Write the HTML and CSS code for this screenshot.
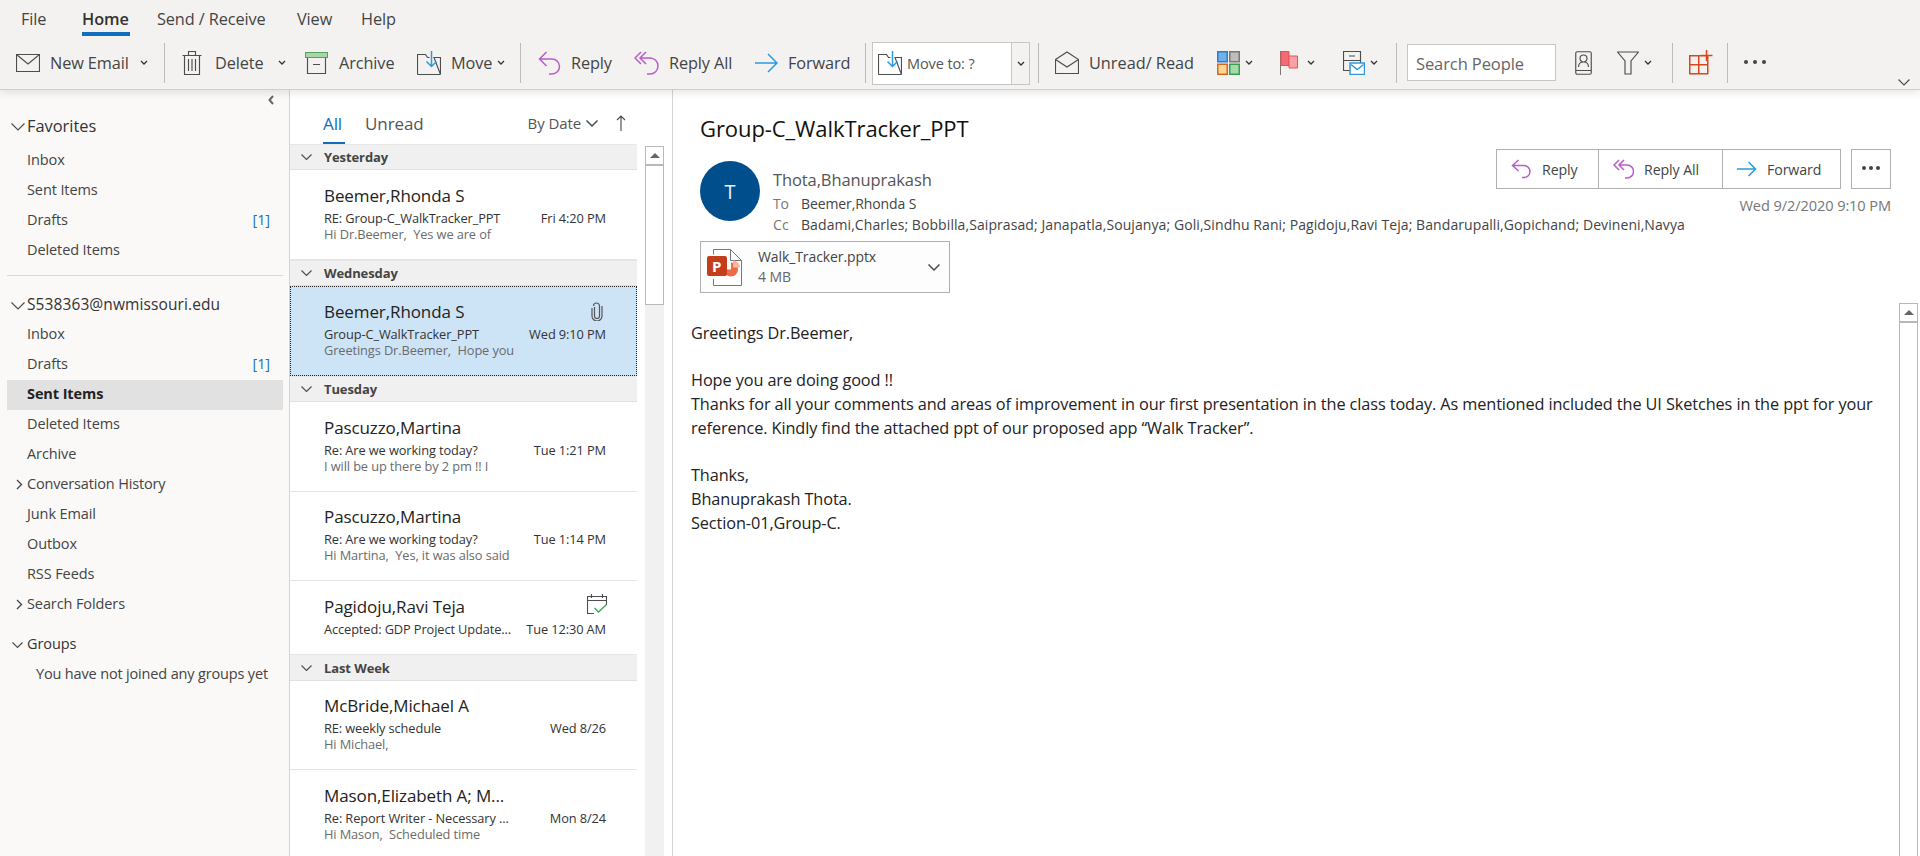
FILE: index.html
```html
<!DOCTYPE html>
<html lang="en">
<head>
<meta charset="utf-8">
<title>Group-C_WalkTracker_PPT - Outlook</title>
<link rel="stylesheet" href="styles.css">
</head>
<body>
<div class="app">
<header class="ribbon">
  <nav class="tabs">
    <span class="tab t-file">File</span>
    <span class="tab t-home active">Home</span>
    <span class="tab t-send">Send / Receive</span>
    <span class="tab t-view">View</span>
    <span class="tab t-help">Help</span>
  </nav>
  <div class="tools">
    <div class="tool w-new"><svg class="ic" width="24" height="18" viewBox="0 0 24 18"><path class="ln" d="M.5.5h23v17H.5zM.5.5 12 10 23.5.5"/></svg><span>New Email</span><svg class="cv cv-new" width="8" height="5" viewBox="0 0 8 5"><path class="cvp" d="M1 1l3 3 3-3"/></svg></div>
    <i class="sep sep-a"></i>
    <div class="tool w-del"><svg class="ic" width="20" height="24" viewBox="0 0 20 24"><path class="ln" d="M.5 4.500h19M6.500 4V.5h7V4M2.500 4.500v19h15v-19M6.500 8v12M10 8v12M13.500 8v12"/></svg><span>Delete</span><svg class="cv cv-del" width="8" height="5" viewBox="0 0 8 5"><path class="cvp" d="M1 1l3 3 3-3"/></svg></div>
    <div class="tool w-arc"><svg class="ic" width="23" height="22" viewBox="0 0 23 22"><path class="ln" d="M2.500 6v15.500h18V6M8 12.500h7"/><rect x=".5" y=".5" width="22" height="5" fill="#a9d5a9" stroke="#4fa35b"/></svg><span>Archive</span></div>
    <div class="tool w-mov"><svg class="ic" width="24" height="24" viewBox="0 0 24 24"><path class="ln" d="M.5 23.500V3.500h8l2 3h2M17 6.500h6.500v17zM.5 23.500h23"/><path class="bl" d="M14.500 0v15M9.500 10.500l5 5 5-5"/></svg><span>Move</span><svg class="cv cv-mov" width="8" height="5" viewBox="0 0 8 5"><path class="cvp" d="M1 1l3 3 3-3"/></svg></div>
    <i class="sep sep-b"></i>
    <div class="tool w-rep"><svg class="ic" width="23" height="24" viewBox="0 0 23 24"><path class="pu" d="M8.500 1 1.500 8l7 7M1.500 8H14a7 7 0 0 1 0 15h-3"/></svg><span>Reply</span></div>
    <div class="tool w-all"><svg class="ic" width="25" height="24" viewBox="0 0 25 24"><path class="pu" d="M7 1 1 7l6 6M12 1 6 7l6 6M6 7h10a7 7 0 0 1 0 16h-3"/></svg><span>Reply All</span></div>
    <div class="tool w-fwd"><svg class="ic" width="23" height="20" viewBox="0 0 23 20"><path class="bl" d="M0 10h21.500M13 1l9 9-9 9"/></svg><span>Forward</span></div>
    <i class="sep sep-c"></i>
    <div class="moveto"><svg class="ic" width="24" height="24" viewBox="0 0 24 24"><path class="ln" d="M.5 23.500V3.500h8l2 3h2M17 6.500h6.500v17zM.5 23.500h23"/><path class="bl" d="M14.500 0v15M9.500 10.500l5 5 5-5"/></svg><span class="moveto-label">Move to: ?</span><span class="moveto-drop"><svg width="8" height="5" viewBox="0 0 8 5"><path class="cvp" d="M1 1l3 3 3-3"/></svg></span></div>
    <i class="sep sep-d"></i>
    <div class="tool w-unr"><svg class="ic" width="24" height="23" viewBox="0 0 24 23"><path class="ln" d="M.5 8.500 12 1l11.500 7.500v14H.5zM.5 8.500 12 16l11.500-7.500"/></svg><span>Unread/ Read</span></div>
    <div class="tool w-cat"><svg class="ic" width="23" height="24" viewBox="0 0 23 24"><rect x=".75" y=".75" width="9.500" height="10" fill="#6fb0e6" stroke="#2b7cd3" stroke-width="1.500"/><rect x="12.750" y=".75" width="9.500" height="10" fill="#bdbdbd" stroke="#777" stroke-width="1.500"/><rect x=".75" y="13.250" width="9.500" height="10" fill="#fdd693" stroke="#d8661a" stroke-width="1.500"/><rect x="12.750" y="13.250" width="9.500" height="10" fill="#a5dba8" stroke="#3b9d4f" stroke-width="1.500"/></svg><svg class="cv cv-cat" width="8" height="5" viewBox="0 0 8 5"><path class="cvp" d="M1 1l3 3 3-3"/></svg></div>
    <div class="tool w-flg"><svg class="ic" width="18" height="24" viewBox="0 0 18 24"><path d="M.5 0v24" stroke="#777" fill="none"/><path d="M1 .5h8v14H1z" fill="#f46a72" stroke="#e8505a"/><path d="M9 5h8.500v12H9z" fill="#f9a1a5" stroke="#e8505a"/></svg><svg class="cv cv-flg" width="8" height="5" viewBox="0 0 8 5"><path class="cvp" d="M1 1l3 3 3-3"/></svg></div>
    <div class="tool w-rul"><svg class="ic" width="22" height="24" viewBox="0 0 22 24"><path class="ln" d="M7 19.500H.5V.5h17v12M6 5h6M.5 9.500h17"/><rect x="7" y="12" width="14.500" height="11.500" fill="#fff" stroke="#2b9ae0" stroke-width="1.500"/><path class="bl" d="m8 13.500 6.200 5 6.300-5"/></svg><svg class="cv cv-rul" width="8" height="5" viewBox="0 0 8 5"><path class="cvp" d="M1 1l3 3 3-3"/></svg></div>
    <i class="sep sep-e"></i>
    <div class="search">Search People</div>
    <div class="tool w-adr"><svg class="ic" width="17" height="24" viewBox="0 0 17 24"><rect class="ln" x=".75" y=".75" width="15.500" height="22.500" rx="1.500"/><path class="ln" d="M1 19.500h15M3.500 16c0-3.500 2-5 5-5s5 1.500 5 5M8.500 11a3.500 3.500 0 1 0 0-7 3.500 3.500 0 0 0 0 7z"/></svg></div>
    <div class="tool w-fil"><svg class="ic" width="22" height="24" viewBox="0 0 22 24"><path class="ln" d="M.5 1h21l-7.500 9v13H8V10z"/></svg><svg class="cv cv-fil" width="8" height="5" viewBox="0 0 8 5"><path class="cvp" d="M1 1l3 3 3-3"/></svg></div>
    <i class="sep sep-f"></i>
    <div class="tool w-add"><svg class="ic" width="24" height="25" viewBox="0 0 24 25"><path class="or" d="M.75 5.750h18v18H.75zM.75 14.750h18M9.750 5.750v18M17.500 0v11M12 5.500h11.500"/></svg></div>
    <i class="sep sep-g"></i>
    <div class="dots"><i></i><i></i><i></i></div>
    <svg class="collapse" width="12" height="7" viewBox="0 0 12 7"><path class="ln" d="M.5.500l5.500 5.500L11.500.5"/></svg>
  </div>
</header>

<main class="main">
  <aside class="side">
    <div class="side-collapse"><svg width="6" height="10" viewBox="0 0 6 10"><path d="M5 1 1.500 5 5 9" fill="none" stroke="#666" stroke-width="2"/></svg></div>
    <div class="sec sec-fav"><svg class="caret" width="14" height="8" viewBox="0 0 14 8"><path class="ln" d="M.5.500 7 7 13.500.5"/></svg>Favorites</div>
    <div class="fold fav-first">Inbox</div>
    <div class="fold">Sent Items</div>
    <div class="fold">Drafts<b class="cnt">[1]</b></div>
    <div class="fold">Deleted Items</div>
    <hr class="side-div">
    <div class="sec sec-acct"><svg class="caret" width="14" height="8" viewBox="0 0 14 8"><path class="ln" d="M.5.500 7 7 13.500.5"/></svg>S538363@nwmissouri.edu</div>
    <div class="fold">Inbox</div>
    <div class="fold">Drafts<b class="cnt">[1]</b></div>
    <div class="fold cur">Sent Items</div>
    <div class="fold">Deleted Items</div>
    <div class="fold">Archive</div>
    <div class="fold tight"><svg class="tw" width="7" height="11" viewBox="0 0 7 11"><path d="m1 1 4.500 4.500L1 10" fill="none" stroke="#444" stroke-width="1.300"/></svg>Conversation History</div>
    <div class="fold">Junk Email</div>
    <div class="fold">Outbox</div>
    <div class="fold">RSS Feeds</div>
    <div class="fold"><svg class="tw" width="7" height="11" viewBox="0 0 7 11"><path d="m1 1 4.500 4.500L1 10" fill="none" stroke="#444" stroke-width="1.300"/></svg>Search Folders</div>
    <div class="fold grp"><svg class="caret caret-s" width="11" height="7" viewBox="0 0 11 7"><path class="ln" d="M.5.500l5 5 5-5"/></svg>Groups</div>
    <div class="fold nogroup tight">You have not joined any groups yet</div>
  </aside>

  <section class="list-pane">
    <div class="list-head">
      <span class="f-all">All</span>
      <span class="f-unread">Unread</span>
      <span class="sort">By Date<svg width="12" height="7" viewBox="0 0 12 7"><path class="ln ln2" d="M.5.500l5.500 5.500 5.500-5.500"/></svg></span>
      <svg class="sort-arrow" width="10" height="16" viewBox="0 0 10 16"><path class="ln" d="M5 16V1M1 5l4-4 4 4"/></svg>
    </div>
    <div class="list-body">
      <div class="msgs">
        <div class="gh"><svg width="11" height="6" viewBox="0 0 11 6"><path class="ln" d="M.5.500l5 5 5-5"/></svg>Yesterday</div>
        <article class="msg">
          <div class="m-name">Beemer,Rhonda S</div>
          <div class="m-row"><span>RE: Group-C_WalkTracker_PPT</span><span>Fri 4:20 PM</span></div>
          <div class="m-prev">Hi Dr.Beemer,&nbsp; Yes we are of</div>
        </article>
        <div class="gh"><svg width="11" height="6" viewBox="0 0 11 6"><path class="ln" d="M.5.500l5 5 5-5"/></svg>Wednesday</div>
        <article class="msg sel">
          <div class="m-name">Beemer,Rhonda S<svg class="clip" width="12" height="19" viewBox="0 0 12 19"><path d="M3.500 5v9a2.500 2.500 0 0 0 5 0V4a3 3 0 0 0-6 0M1 6v8a5 5 0 0 0 10 0V4" fill="none" stroke="#555" stroke-width="1.200"/></svg></div>
          <div class="m-row"><span>Group-C_WalkTracker_PPT</span><span>Wed 9:10 PM</span></div>
          <div class="m-prev">Greetings Dr.Beemer,&nbsp; Hope you</div>
        </article>
        <div class="gh"><svg width="11" height="6" viewBox="0 0 11 6"><path class="ln" d="M.5.500l5 5 5-5"/></svg>Tuesday</div>
        <article class="msg">
          <div class="m-name">Pascuzzo,Martina</div>
          <div class="m-row"><span>Re: Are we working today?</span><span>Tue 1:21 PM</span></div>
          <div class="m-prev">I will be up there by 2 pm !! I</div>
        </article>
        <article class="msg">
          <div class="m-name">Pascuzzo,Martina</div>
          <div class="m-row"><span>Re: Are we working today?</span><span>Tue 1:14 PM</span></div>
          <div class="m-prev">Hi Martina,&nbsp; Yes, it was also said</div>
        </article>
        <article class="msg short">
          <div class="m-name">Pagidoju,Ravi Teja<svg class="cal" width="20" height="20" viewBox="0 0 20 20"><path class="ln" d="M7 19.500H.5v-17h19V11M.5 6.500h19M4.500 0v4M15.500 0v4"/><path d="m7.500 14 4 4 8-7.500" fill="none" stroke="#3ba55d" stroke-width="1.300"/></svg></div>
          <div class="m-row"><span>Accepted: GDP Project Update...</span><span>Tue 12:30 AM</span></div>
        </article>
        <div class="gh"><svg width="11" height="6" viewBox="0 0 11 6"><path class="ln" d="M.5.500l5 5 5-5"/></svg>Last Week</div>
        <article class="msg">
          <div class="m-name">McBride,Michael A</div>
          <div class="m-row"><span>RE: weekly schedule</span><span>Wed 8/26</span></div>
          <div class="m-prev">Hi Michael,</div>
        </article>
        <article class="msg">
          <div class="m-name">Mason,Elizabeth A; M...</div>
          <div class="m-row"><span>Re: Report Writer - Necessary ...</span><span>Mon 8/24</span></div>
          <div class="m-prev">Hi Mason,&nbsp; Scheduled time</div>
        </article>
      </div>
      <div class="vbar list-bar"><div class="vup"><i></i></div><div class="vthumb"></div></div>
    </div>
  </section>

  <section class="read">
    <h1 class="subject">Group-C_WalkTracker_PPT</h1>
    <div class="meta">
      <div class="avatar">T</div>
      <div class="people">
        <div class="from">Thota,Bhanuprakash</div>
        <div class="rcpt rcpt-to"><span class="lbl">To</span><span>Beemer,Rhonda S</span></div>
        <div class="rcpt"><span class="lbl">Cc</span><span>Badami,Charles; Bobbilla,Saiprasad; Janapatla,Soujanya; Goli,Sindhu Rani; Pagidoju,Ravi Teja; Bandarupalli,Gopichand; Devineni,Navya</span></div>
      </div>
      <div class="actions">
        <div class="act-row">
          <div class="act-group">
            <div class="act a-rep"><svg width="21" height="20" viewBox="0 0 21 20"><path class="pu" d="M7.500 1 1.500 6.500l6 5.500M1.500 6.500H13a5.800 5.800 0 0 1 0 12h-2"/></svg>Reply</div>
            <div class="act a-all"><svg width="21" height="20" viewBox="0 0 21 20"><path class="pu" d="M6 1 1 6l5 5M11 1 6 6l5 5M6 6h8a6 6 0 0 1 0 13h-2"/></svg>Reply All</div>
            <div class="act a-fwd"><svg width="20" height="16" viewBox="0 0 20 16"><path class="bl" d="M0 8h18.500M11.500 1l7 7-7 7"/></svg>Forward</div>
          </div>
          <div class="more"><i></i><i></i><i></i></div>
        </div>
        <div class="when">Wed 9/2/2020 9:10 PM</div>
      </div>
    </div>
    <div class="attach">
      <svg class="ppt" width="35" height="37" viewBox="0 0 35 37"><path d="M6.500 5.500V.5h17l11 11v25h-28V30" fill="#fff" stroke="#777"/><path d="M23.500.5v11h11" fill="none" stroke="#777"/><path d="M24 13.500a7 7 0 1 1-7 7h7z" fill="#ed6c47"/><path d="M26 11.500a7 7 0 0 1 7 7h-7z" fill="#ffb49c"/><rect y="7" width="20" height="20" rx="2" fill="#c43e1c"/></svg>
      <span class="ppt-p">P</span>
      <div class="att-text"><div class="att-name">Walk_Tracker.pptx</div><div class="att-size">4 MB</div></div>
      <svg class="att-cv" width="12" height="7" viewBox="0 0 12 7"><path class="ln ln2" d="M.5.500l5.500 5.500 5.500-5.500"/></svg>
    </div>
    <div class="body-wrap">
      <div class="mail">
        <p>Greetings Dr.Beemer,</p>
        <p>Hope you are doing good !!<br>Thanks for all your comments and areas of improvement in our first presentation in the class today. As mentioned included the UI Sketches in the ppt for your reference. Kindly find the attached ppt of our proposed app “Walk Tracker”.</p>
        <p>Thanks,<br>Bhanuprakash Thota.<br>Section-01,Group-C.</p>
      </div>
      <div class="vbar mail-bar"><div class="vup"><i></i></div><div class="vthumb"></div></div>
    </div>
  </section>
</main>
</div>
</body>
</html>
```
FILE: styles.css
```css
* { box-sizing: border-box; }
html, body { margin: 0; height: 100%; overflow: hidden; }
body { font-family: "Open Sans", "Noto Sans", sans-serif; color: #444; background: #fff; }
.app { height: 856px; display: flex; flex-direction: column; }

/* line styles for icons */
.ln { fill: none; stroke: #4d4d4d; stroke-width: 1.150; }
.ln2 { stroke-width: 1.500; }
.bl { fill: none; stroke: #2b9ae0; stroke-width: 1.500; }
.pu { fill: none; stroke: #b85cc8; stroke-width: 1.500; }
.or { fill: none; stroke: #d9481c; stroke-width: 1.500; }
.cvp { fill: none; stroke: #333; stroke-width: 1.300; }

/* ribbon */
.ribbon { height: 90px; flex: none; background: #f3f2f1; border-bottom: 1px solid #cfcfcf; box-shadow: 0 3px 8px rgba(0,0,0,.10); position: relative; z-index: 2; }
.tabs { height: 36px; display: flex; }
.tab { font-size: 16.300px; line-height: 20px; padding-top: 9px; letter-spacing: -.1px; position: relative; }
.t-file { margin-left: 21px; width: 61px; }
.t-home { width: 75px; color: #333; font-weight: 600; }
.t-send { width: 140px; }
.t-view { width: 64px; }
.active::after { content: ""; position: absolute; left: 0; width: 48px; top: 32px; height: 4px; background: #106ebe; }
.tools { height: 53px; display: flex; align-items: center; padding-left: 16px; position: relative; font-size: 16.300px; letter-spacing: -.1px; }
.tool { display: flex; align-items: center; height: 40px; flex: none; position: relative; }
.ic { flex: none; margin-right: 10px; }
.cv { flex: none; }
.w-new { width: 148px; }
.w-del { width: 123px; }
.w-arc { width: 112px; }
.w-mov { width: 103px; }
.w-rep { width: 96px; }
.w-all { width: 121px; }
.w-fwd { width: 110px; }
.w-unr { width: 162px; letter-spacing: 0; }
.w-cat { width: 63px; }
.w-flg { width: 63px; }
.w-rul { width: 53px; }
.w-adr { width: 42px; }
.w-fil { width: 55px; }
.w-add { width: 38px; }
.cv-new { margin-left: 11px; }
.cv-del { margin-left: 14px; }
.cv-mov { margin-left: 5px; }
.w-del .ic { margin-right: 13px; }
.w-arc .ic { margin-right: 11px; }
.w-cat .ic, .w-rul .ic, .w-fil .ic { margin-right: 5px; }
.w-flg .ic { margin-right: 9px; }
.sep { width: 1px; height: 40px; background: #bdbbb9; flex: none; }
.sep-a { margin-right: 17px; }
.sep-b { margin-right: 17px; }
.sep-c { margin-right: 6px; }
.sep-d { margin: 0 16px 0 8px; }
.sep-e { margin-right: 10px; }
.sep-f { margin-right: 16px; }
.sep-g { margin-right: 16px; }
.moveto { width: 158px; height: 43px; flex: none; display: flex; align-items: center; background: #fff; border: 1px solid #c8c6c4; padding-left: 5px; margin-top: 1px; font-size: 14.500px; }
.moveto .ic { margin-right: 5px; }
.moveto-label { flex: 1; color: #555; }
.moveto-drop { width: 18px; height: 100%; flex: none; background: #f3f2f1; border-left: 1px solid #c8c6c4; display: flex; align-items: center; justify-content: center; }
.search { width: 149px; height: 37px; flex: none; background: #fff; border: 1px solid #c8c6c4; padding-left: 8px; line-height: 37px; color: #666; font-size: 16.500px; margin-right: 19px; }
.dots { display: flex; gap: 5px; flex: none; margin-top: -2px; }
.dots i, .more i { width: 4px; height: 4px; border-radius: 50%; background: #444; display: block; }
.collapse { position: absolute; left: 1898px; top: 43px; }

/* main area */
.main { flex: 1; min-height: 0; display: grid; grid-template-columns: 290px 383px 1fr; overflow: hidden; }

/* folder pane */
.side { background: #faf9f8; border-right: 1px solid #d4d4d4; font-size: 14.500px; padding: 0 6px 0 7px; }
.side-collapse { height: 20px; display: flex; justify-content: flex-end; align-items: center; padding-right: 9px; }
.sec { height: 30px; display: flex; align-items: center; font-size: 15.500px; padding-left: 20px; position: relative; color: #333; }
.sec-fav { font-size: 16.400px; }
.sec-acct { letter-spacing: .1px; margin-bottom: 1px; }
.caret { position: absolute; left: 4px; top: 13px; }
.caret-s { left: 5px; top: 12px; }
.fold { height: 30px; display: flex; align-items: center; padding-left: 20px; padding-bottom: 3px; position: relative; letter-spacing: -.1px; }
.tight { letter-spacing: -.16px; }
.fav-first { margin-top: 6px; }
.cnt { font-weight: 400; color: #1e6fc0; margin-left: auto; margin-right: 13px; }
.cur { background: #e1e1e1; color: #222; font-weight: 700; }
.side-div { border: 0; height: 1px; background: #d8d8d8; margin: 9px 0 13px; }
.tw { position: absolute; left: 9px; top: 9px; }
.grp { margin-top: 10px; color: #333; }
.nogroup { padding-left: 29px; }

/* message list */
.list-pane { display: flex; flex-direction: column; min-height: 0; border-right: 1px solid #d4d4d4; }
.list-head { height: 53.500px; flex: none; display: flex; align-items: center; position: relative; padding-left: 33px; padding-top: 13px; font-size: 17px; letter-spacing: -.1px; }
.f-all { color: #106ebe; margin-right: 23px; }
.f-all::after { content: ""; position: absolute; left: 33px; top: 52px; width: 22px; height: 2px; background: #106ebe; }
.f-unread { color: #555; }
.sort { font-size: 15px; color: #555; margin-left: 104px; display: flex; align-items: center; gap: 5px; }
.sort-arrow { margin-left: 18px; }
.list-body { flex: 1; display: flex; min-height: 0; overflow: hidden; }
.msgs { width: 347px; flex: none; }
.gh { height: 26.500px; background: #f0f0f0; border-top: 1px solid #e6e6e6; border-bottom: 1px solid #e1e1e1; display: flex; align-items: center; padding-top: 1px; font-size: 13px; font-weight: 700; color: #444; letter-spacing: -.1px; }
.gh svg { margin: 0 12px 0 11px; }
.msg { height: 89.500px; border-bottom: 1px solid #e4e4e4; padding: 12.500px 31px 0 34px; position: relative; }
.short { height: 73px; border-bottom: 0; }
.sel { background: #cde4f7; border: 1px dotted #222; padding: 11.500px 30px 0 33px; }
.m-name { font-size: 17px; line-height: 25px; color: #222; letter-spacing: -.1px; display: flex; justify-content: space-between; align-items: center; white-space: nowrap; }
.m-row { display: flex; justify-content: space-between; font-size: 12.800px; line-height: 20px; color: #333; white-space: nowrap; letter-spacing: -.1px; }
.m-prev { font-size: 12.800px; line-height: 13px; color: #6b6b6b; white-space: nowrap; letter-spacing: -.1px; }
.clip { margin-right: 3px; }
.cal { margin-top: -4px; margin-right: -1px; }
.vbar { width: 19px; flex: none; background: #f1f1f1; display: flex; flex-direction: column; }
.list-bar { margin-left: 8px; margin-top: 2px; }
.vup { height: 19px; background: #fff; border: 1px solid #b8b8b8; display: flex; align-items: center; justify-content: center; flex: none; }
.vup i { width: 0; height: 0; border-left: 5px solid transparent; border-right: 5px solid transparent; border-bottom: 5px solid #666; }
.vthumb { height: 140px; background: #fff; border: 1px solid #b8b8b8; flex: none; }

/* reading pane */
.read { display: flex; flex-direction: column; min-width: 0; min-height: 0; padding-left: 27px; }
.subject { margin: 25px 0 0; font-size: 22px; line-height: 26px; font-weight: 400; color: #111; letter-spacing: -.08px; }
.meta { display: flex; margin-top: 20px; height: 80px; }
.avatar { width: 60px; height: 60px; border-radius: 50%; background: #004e8c; color: #e8eef5; display: flex; align-items: center; justify-content: center; font-size: 20px; flex: none; }
.people { margin-left: 13px; flex: 1; min-width: 0; }
.from { font-size: 16.500px; line-height: 22px; margin-top: 8px; color: #555; letter-spacing: -.1px; }
.rcpt { display: flex; font-size: 14px; line-height: 22px; color: #444; white-space: nowrap; letter-spacing: .08px; }
.rcpt-to { margin-top: 2px; margin-bottom: -1px; letter-spacing: -.1px; }
.lbl { width: 28px; color: #777; flex: none; }
.actions { flex: none; margin-right: 29px; margin-top: -12px; display: flex; flex-direction: column; align-items: flex-end; }
.act-row { display: flex; gap: 10px; height: 40px; }
.act-group { display: flex; border: 1px solid #b0b0b0; background: #fff; }
.act { display: flex; align-items: center; gap: 10px; font-size: 14.200px; border-right: 1px solid #b0b0b0; padding-left: 14px; color: #444; letter-spacing: -.1px; }
.act:last-child { border-right: 0; }
.a-rep { width: 102px; }
.a-all { width: 124px; }
.a-fwd { width: 117px; }
.more { width: 40px; border: 1px solid #b0b0b0; display: flex; align-items: center; justify-content: center; gap: 3px; padding-bottom: 2px; }
.when { font-size: 14.600px; line-height: 20px; margin-top: 6px; color: #777; letter-spacing: -.1px; }
.attach { width: 250px; height: 52px; flex: none; border: 1px solid #b0b0b0; background: #fdfdfd; display: flex; align-items: center; padding-left: 6px; position: relative; }
.ppt { flex: none; }
.ppt-p { position: absolute; left: 11px; top: 14px; color: #fff; font-weight: 700; font-size: 15px; line-height: 20px; }
.att-text { margin-left: 16px; flex: 1; font-size: 14px; line-height: 20px; letter-spacing: -.1px; margin-top: -1px; }
.att-size { color: #666; }
.att-cv { margin-right: 9px; }
.body-wrap { flex: 1; min-height: 0; display: flex; margin-left: -27px; margin-top: 10px; }
.mail { flex: 1; min-width: 0; padding: 18px 10px 0 18px; font-size: 16.300px; line-height: 24px; color: #222; letter-spacing: -.1px; }
.mail p { margin: 0 0 23px; }
.mail-bar { margin-right: 2px; margin-left: 7px; }
.mail-bar .vthumb { height: 100%; }
```
